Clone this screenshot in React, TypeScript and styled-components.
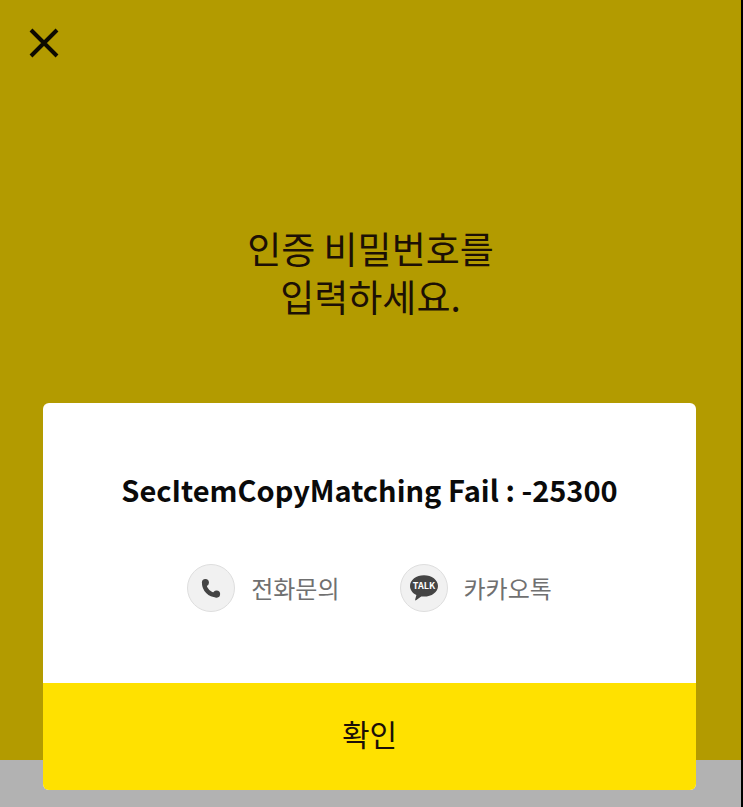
import React from "react";
import styled, { createGlobalStyle } from "styled-components";

const GlobalStyle = createGlobalStyle`
  * {
    box-sizing: border-box;
  }
  html, body, #root {
    height: 100%;
  }
  body {
    margin: 0;
    background: #000;
    font-family: "Noto Sans CJK KR", "Noto Sans", sans-serif;
  }
  button {
    font-family: inherit;
    border: 0;
    padding: 0;
    cursor: pointer;
  }
`;

const Screen = styled.div`
  position: relative;
  display: flex;
  flex-direction: column;
  min-height: 100vh;
  margin-right: 2px;
  background: #b2b2b2;
`;

const PasswordPanel = styled.main`
  flex: 1;
  margin-bottom: 47px;
  padding: 23px 24px;
  background: #b39b00;
  color: #1c1005;
`;

const CloseButton = styled.button`
  display: flex;
  align-items: center;
  justify-content: center;
  width: 40px;
  height: 40px;
  background: transparent;
  color: #0d0a00;
`;

const Prompt = styled.h1`
  margin: 161px 0 0;
  text-align: center;
  font-size: 37px;
  font-weight: 400;
  line-height: 48px;
`;

const Overlay = styled.div`
  position: absolute;
  inset: 0;
  display: flex;
  align-items: flex-end;
  padding: 0 45px 17px 43px;
`;

const Dialog = styled.section`
  flex: 1;
  overflow: hidden;
  border-radius: 6px;
  background: #fff;
`;

const DialogBody = styled.div`
  padding: 66px 24px 71px;
`;

const DialogTitle = styled.h2`
  margin: 0 0 55px;
  text-align: center;
  font-size: 29px;
  font-weight: 700;
  line-height: 40px;
  color: #0a0a0a;
`;

const ContactList = styled.div`
  display: flex;
  justify-content: center;
  gap: 60px;
`;

const ContactLink = styled.a`
  display: flex;
  align-items: center;
  gap: 16px;
  font-size: 24px;
  font-weight: 400;
  line-height: 48px;
  color: #707070;
  text-decoration: none;
`;

const ContactIcon = styled.span`
  display: flex;
  align-items: center;
  justify-content: center;
  width: 48px;
  height: 48px;
  border: 1px solid #dedede;
  border-radius: 50%;
  background: #f1f1f1;
`;

const ConfirmButton = styled.button`
  display: block;
  width: 100%;
  height: 107px;
  padding-bottom: 8px;
  background: #ffe100;
  color: #1c1008;
  font-size: 30px;
  font-weight: 400;
  line-height: 40px;
`;

function CloseIcon() {
  return (
    <svg width="30" height="30" viewBox="0 0 30 30" aria-hidden="true">
      <path d="M2 2 28 28M28 2 2 28" fill="none" stroke="currentColor" strokeWidth="4" />
    </svg>
  );
}

function PhoneIcon() {
  return (
    <svg width="46" height="46" viewBox="0 0 46 46" aria-hidden="true">
      <path
        d="M16.200 18C16.200 24.500 21.500 30.200 28.500 30.300"
        fill="none"
        stroke="#444"
        strokeWidth="4.400"
        strokeLinecap="round"
      />
      <circle cx="17.400" cy="17.600" r="3.500" fill="#444" />
      <circle cx="28.600" cy="29" r="3.500" fill="#444" />
    </svg>
  );
}

function TalkIcon() {
  return (
    <svg width="46" height="46" viewBox="0 0 46 46" aria-hidden="true">
      <path
        fill="#444"
        d="M23 10.200c7.700 0 14 4.700 14 10.700s-6.300 10.700-14 10.700c-1 0-1.900-.1-2.800-.2L15 35.200c-.6.4-1 .1-.8-.6l1.200-4.600C11.600 28.100 9 24.800 9 20.900c0-6 6.300-10.700 14-10.700z"
      />
      <text
        x="23"
        y="24"
        textAnchor="middle"
        fill="#fff"
        fontFamily="Noto Sans CJK KR, sans-serif"
        fontSize="9"
        fontWeight="700"
      >
        TALK
      </text>
    </svg>
  );
}

export default function App() {
  return (
    <>
      <GlobalStyle />
      <Screen>
        <PasswordPanel>
          <CloseButton type="button" aria-label="닫기">
            <CloseIcon />
          </CloseButton>
          <Prompt>
            인증 비밀번호를
            <br />
            입력하세요.
          </Prompt>
        </PasswordPanel>
        <Overlay>
          <Dialog role="alertdialog" aria-modal="true" aria-labelledby="dialog-title">
            <DialogBody>
              <DialogTitle id="dialog-title">SecItemCopyMatching Fail : -25300</DialogTitle>
              <ContactList>
                <ContactLink href="#phone">
                  <ContactIcon>
                    <PhoneIcon />
                  </ContactIcon>
                  전화문의
                </ContactLink>
                <ContactLink href="#talk">
                  <ContactIcon>
                    <TalkIcon />
                  </ContactIcon>
                  카카오톡
                </ContactLink>
              </ContactList>
            </DialogBody>
            <ConfirmButton type="button">확인</ConfirmButton>
          </Dialog>
        </Overlay>
      </Screen>
    </>
  );
}
